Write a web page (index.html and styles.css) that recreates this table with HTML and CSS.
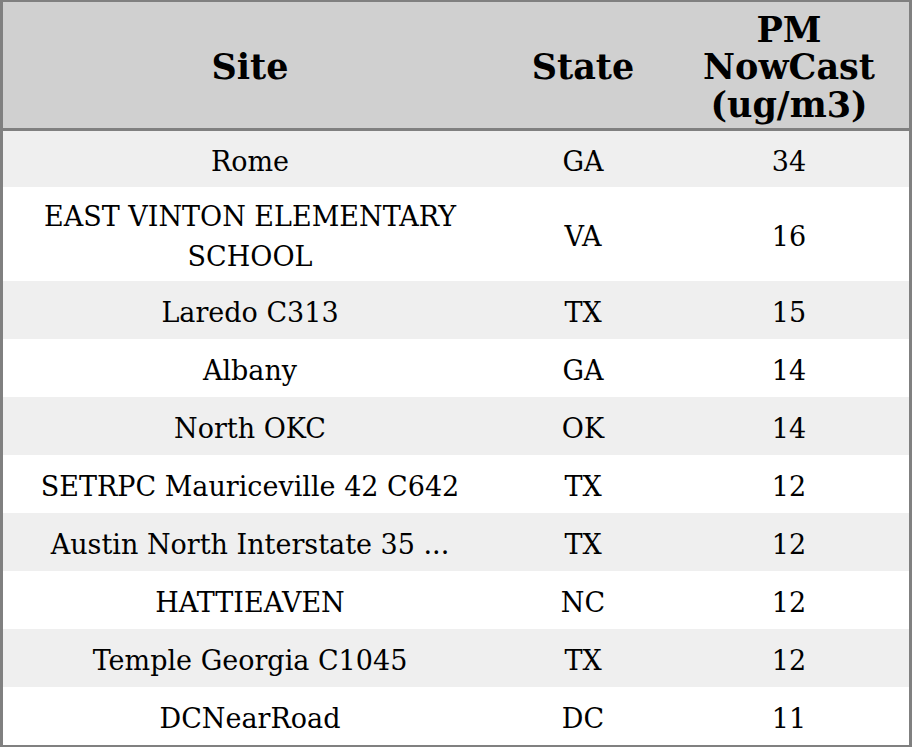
FILE: index.html
```html
<!DOCTYPE html>
<html>
<head>
<meta charset="utf-8">
<link rel="stylesheet" href="styles.css">
</head>
<body>
<table class="grid">
  <colgroup>
    <col class="c-site"><col class="c-state"><col class="c-val">
  </colgroup>
  <thead>
    <tr class="head"><th>Site</th><th>State</th><th>PM<br>NowCast<br>(ug/m3)</th></tr>
  </thead>
  <tbody>
    <tr class="odd first"><td>Rome</td><td>GA</td><td>34</td></tr>
    <tr class="even tall"><td>EAST VINTON ELEMENTARY<br>SCHOOL</td><td>VA</td><td>16</td></tr>
    <tr class="odd"><td>Laredo C313</td><td>TX</td><td>15</td></tr>
    <tr class="even"><td>Albany</td><td>GA</td><td>14</td></tr>
    <tr class="odd"><td>North OKC</td><td>OK</td><td>14</td></tr>
    <tr class="even"><td>SETRPC Mauriceville 42 C642</td><td>TX</td><td>12</td></tr>
    <tr class="odd"><td>Austin North Interstate 35 ...</td><td>TX</td><td>12</td></tr>
    <tr class="even"><td>HATTIEAVEN</td><td>NC</td><td>12</td></tr>
    <tr class="odd"><td>Temple Georgia C1045</td><td>TX</td><td>12</td></tr>
    <tr class="even"><td>DCNearRoad</td><td>DC</td><td>11</td></tr>
  </tbody>
</table>
</body>
</html>
```
FILE: styles.css
```css
html, body {
  margin: 0;
  padding: 0;
  background: #ffffff;
}
.grid {
  width: 912px;
  border-collapse: separate;
  border-spacing: 0;
  table-layout: fixed;
  border-style: solid;
  border-color: #808080;
  border-width: 2px 3px 2px 3px;
  font-family: "DejaVu Serif", serif;
  color: #000;
  box-sizing: border-box;
}
.c-site { width: 494px; }
.c-state { width: 172px; }
.c-val { width: 240px; }
.head th {
  background: #d0d0d0;
  font-size: 35px;
  font-weight: bold;
  line-height: 37.5px;
  height: 129px;
  padding: 4px 0 0 0;
  text-align: center;
  vertical-align: middle;
  border-bottom: 3px solid #808080;
  box-sizing: border-box;
}
td {
  font-size: 27px;
  line-height: 40px;
  text-align: center;
  vertical-align: middle;
  padding: 5px 0 0 0;
  height: 58px;
  box-sizing: border-box;
}
.first td { height: 56px; }
.tall td { height: 94px; }
.odd td { background: #efefef; }
.even td { background: #ffffff; }
```
